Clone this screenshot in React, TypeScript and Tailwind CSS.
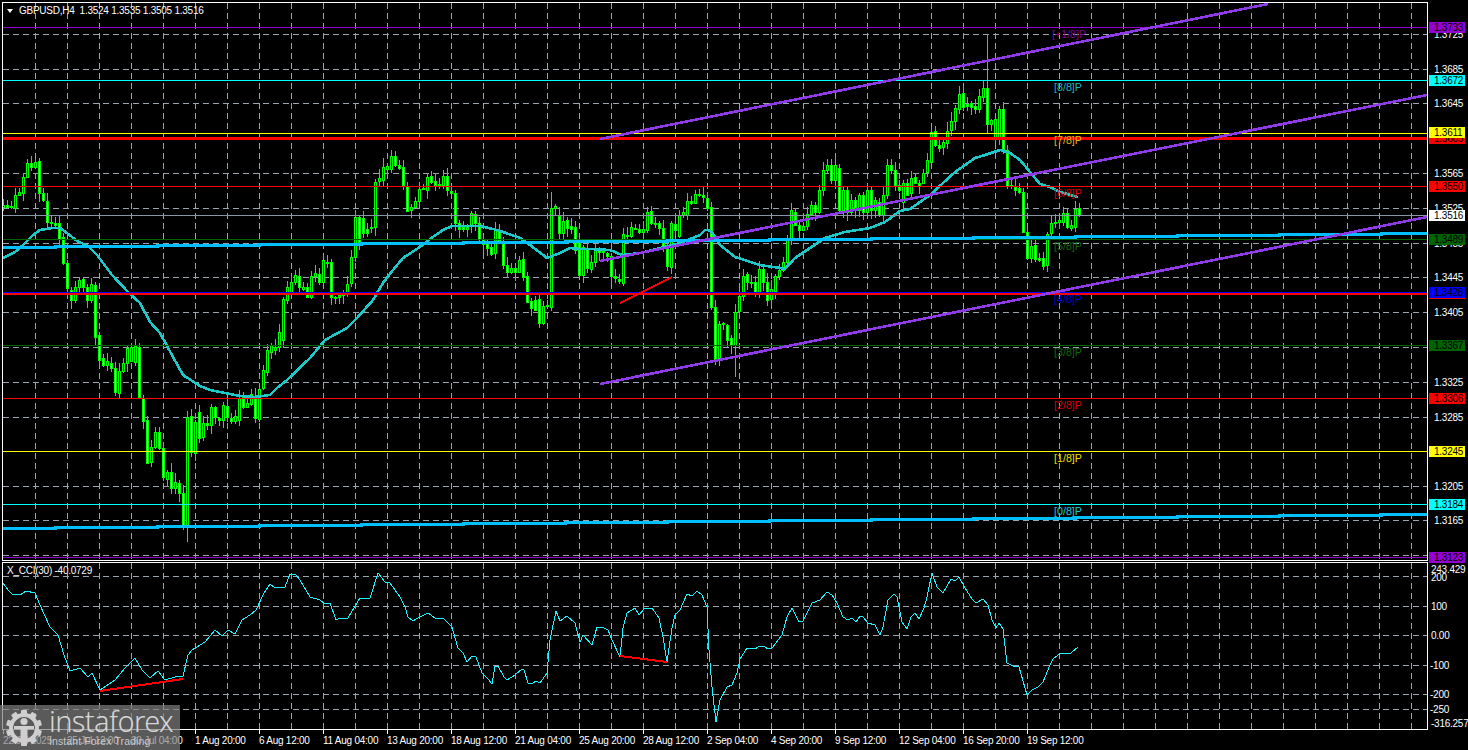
import React from "react";

// [open y, close y] in page pixels for candles at x = 3 + 4k. close < open means a rising bar.
const C: [number, number][] = [
[207,205],[205,207],[206,207],[208,195],[195,192],[193,177],[177,163],[163,167],[167,162],[161,193],
[193,200],[201,222],[222,223],[223,225],[223,239],[237,263],[263,288],[290,300],[300,287],[287,280],
[279,287],[287,300],[300,284],[285,337],[335,360],[358,365],[365,361],[363,368],[368,392],[393,371],
[371,363],[363,348],[361,347],[362,346],[347,397],[398,421],[420,463],[462,447],[447,432],[432,448],
[448,477],[479,472],[472,488],[488,482],[483,493],[493,525],[525,417],[416,452],[453,422],[412,438],
[437,423],[423,425],[425,407],[407,417],[418,420],[420,405],[406,417],[418,421],[421,416],[420,398],
[397,407],[407,403],[404,394],[396,418],[419,389],[388,370],[372,350],[352,345],[350,347],[347,332],
[340,299],[300,287],[292,282],[282,275],[276,287],[289,287],[287,297],[297,276],[276,273],[274,282],
[282,260],[263,262],[262,297],[298,297],[297,295],[295,293],[292,284],[283,257],[257,217],[217,242],
[218,233],[229,233],[228,227],[227,182],[181,178],[180,167],[169,166],[169,156],[156,165],[165,168],
[167,185],[186,211],[210,207],[207,201],[201,189],[189,188],[190,177],[176,182],[181,185],[184,185],
[185,176],[176,190],[191,193],[193,223],[223,229],[227,229],[229,227],[226,213],[214,223],[223,239],
[239,244],[243,248],[247,254],[253,230],[230,240],[243,265],[265,272],[272,268],[268,272],[272,260],
[259,277],[276,302],[301,308],[300,310],[299,323],[323,306],[306,305],[307,208],[208,206],[216,233],
[233,221],[220,228],[226,229],[227,250],[242,275],[275,247],[248,268],[269,262],[262,248],[250,252],
[251,252],[253,256],[256,276],[276,278],[279,281],[283,234],[235,236],[236,227],[228,229],[229,232],
[232,229],[230,212],[211,223],[223,224],[223,228],[228,247],[248,266],[267,223],[224,230],[236,215],
[215,212],[215,201],[201,203],[203,194],[194,195],[195,197],[198,208],[207,307],[307,360],[358,324],
[324,323],[325,340],[338,345],[345,312],[311,296],[296,276],[274,282],[282,283],[282,293],[293,269],
[269,282],[282,300],[299,289],[291,276],[276,270],[270,262],[262,240],[240,210],[212,225],[225,230],
[230,226],[226,214],[214,205],[205,212],[212,190],[190,170],[170,165],[165,180],[180,165],[168,210],
[210,190],[190,212],[212,200],[200,210],[210,195],[195,212],[212,190],[190,210],[210,200],[202,215],
[215,195],[195,165],[165,170],[170,185],[185,190],[202,183],[183,195],[193,178],[177,183],[183,186],
[183,173],[172,160],[162,132],[131,145],[145,148],[147,142],[143,131],[130,121],[121,108],[109,94],
[93,107],[104,106],[103,107],[106,109],[109,96],[97,88],[88,124],[124,120],[137,119],[137,109],
[109,149],[150,186],[185,186],[187,190],[188,192],[192,232],[232,258],[258,246],[245,259],[258,260],
[258,266],[265,234],[233,223],[223,222],[222,220],[222,213],[213,227],[228,225],[227,209],[208,215],
];

const MA = "3,258 15,252 23,245 33,235 40,230 52,228 60,228 67,233 77,241 88,246 97,255 112,275 128,292 140,303 150,322 160,333 173,357 183,375 200,386 210,390 225,393 240,396 255,397 270,395 277,388 287,380 310,358 325,340 347,328 357,318 373,300 383,283 393,270 403,258 423,245 430,239 443,230 452,226 480,226 493,229 503,232 520,238 530,245 547,258 560,253 570,248 580,249 590,249 610,250 622,255 640,253 660,248 680,243 700,235 705,230 708,230 712,232 720,245 735,257 760,265 780,268 785,269 795,258 810,248 825,238 845,232 870,228 885,222 900,211 910,209 930,195 955,172 975,158 985,155 1000,150 1010,153 1020,160 1030,172 1040,184 1050,187 1060,192 1078,197";

const CCI = "3,583 8,590 12,594 20,595 26,591 35,593 40,605 50,627 58,635 64,655 70,671 80,668 88,677 92,673 100,690 115,680 125,668 135,658 142,670 150,678 158,671 165,680 175,677 183,676 188,655 192,650 205,642 215,630 222,636 228,630 235,634 242,620 250,615 256,610 264,593 270,584 275,588 285,587 290,574 295,574 300,580 310,597 320,600 325,604 330,603 336,620 340,618 348,618 360,598 370,598 378,573 385,582 390,583 400,597 405,607 408,617 413,621 418,618 428,613 435,618 443,618 452,627 458,648 463,653 467,662 472,656 476,657 482,673 488,679 492,684 495,666 498,666 504,677 507,680 515,675 522,669 524,670 528,683 532,684 536,681 540,683 547,673 550,640 556,611 560,621 567,616 575,623 580,642 583,635 592,645 597,627 602,627 608,630 612,640 620,657 623,628 627,613 635,608 639,615 645,608 652,608 659,618 663,637 667,662 672,628 675,615 680,610 687,594 692,596 697,591 702,595 707,607 709,650 712,687 716,722 720,700 727,687 732,685 737,673 740,659 747,648 755,649 760,646 764,646 768,649 772,648 782,635 787,617 792,608 799,622 803,621 812,603 820,600 827,592 832,595 837,603 843,617 848,620 852,618 856,622 860,616 863,617 868,623 875,625 880,635 883,627 888,600 894,594 897,597 902,622 907,629 911,617 915,613 919,619 924,608 927,597 932,573 937,587 943,593 951,579 955,581 959,577 965,588 972,599 976,603 983,599 988,605 992,620 996,628 999,623 1003,629 1007,663 1013,666 1019,667 1027,695 1032,690 1038,687 1043,682 1050,665 1053,659 1061,653 1071,653 1078,647";

const rnd = (i: number, n: number) => ((i * 7919 + n * 104729 + i * i * 13) % 97) / 97;

const verticals = Array.from({ length: 44 }, (_, i) => 35 + 32 * i);
const mainGrid = [34, 69, 103, 138, 173, 208, 243, 277, 312, 347, 382, 417, 451, 486, 520, 555];
const cciGrid = [576, 606, 635, 665, 694, 709];

const levels = [
  { y: 27, h: 1, c: "#9400d3" }, { y: 80, h: 1, c: "#00ffff" }, { y: 133, h: 1, c: "#ffff00" },
  { y: 137, h: 3, c: "#ff0000" }, { y: 186, h: 1, c: "#ff0000" }, { y: 215, h: 1, c: "#8895a2" },
  { y: 239, h: 1, c: "#006400" }, { y: 292, h: 1, c: "#0000ff" }, { y: 293, h: 2, c: "#ff0000" },
  { y: 345, h: 1, c: "#006400" }, { y: 398, h: 1, c: "#ff0000" }, { y: 451, h: 1, c: "#ffff00" },
  { y: 504, h: 1, c: "#00ffff" }, { y: 557, h: 1, c: "#9400d3" },
];

const steps = (start: number) => {
  const pts: string[] = [];
  let x = 3;
  for (let k = 0; k < 15; k++) {
    const nx = k === 14 ? 1427 : 55 + 102 * k;
    pts.push(`${x},${start - k}`, `${nx},${start - k}`);
    x = nx;
  }
  return pts.join(" ");
};

const pivots = [
  { t: "[+1/8]P", y: 34, x: 1052, c: "text-[#7a0a8a]" }, { t: "[8/8]P", y: 87, x: 1054, c: "text-[#1fb6c9]" },
  { t: "[7/8]P", y: 140, x: 1054, c: "text-[#e0b818]" }, { t: "[6/8]P", y: 193, x: 1054, c: "text-[#d80000]" },
  { t: "[5/8]P", y: 246, x: 1054, c: "text-[#0a6a0a]" }, { t: "[4/8]P", y: 299, x: 1054, c: "text-[#0000d8]" },
  { t: "[3/8]P", y: 352, x: 1054, c: "text-[#0a6a0a]" }, { t: "[2/8]P", y: 405, x: 1054, c: "text-[#d80000]" },
  { t: "[1/8]P", y: 458, x: 1054, c: "text-[#e8e000]" }, { t: "[0/8]P", y: 511, x: 1054, c: "text-[#1fc8d8]" },
];

const priceTicks = [
  ["1.3725", 34], ["1.3685", 69], ["1.3645", 103], ["1.3565", 173], ["1.3525", 208], ["1.3485", 243],
  ["1.3445", 277], ["1.3405", 312], ["1.3365", 347], ["1.3325", 382], ["1.3285", 417], ["1.3205", 486], ["1.3165", 520],
] as const;

const priceTags = [
  { t: "1.3733", y: 27, c: "bg-[#9400d3]" }, { t: "1.3672", y: 80, c: "bg-[#00ffff]" },
  { t: "1.3605", y: 138, c: "bg-[#ff0000]" }, { t: "1.3611", y: 132, c: "bg-[#ffff00]" },
  { t: "1.3550", y: 186, c: "bg-[#ff0000]" }, { t: "1.3516", y: 215, c: "bg-white" },
  { t: "1.3489", y: 239, c: "bg-[#006400]" }, { t: "1.3426", y: 293, c: "bg-[#ff0000]" },
  { t: "1.3428", y: 292, c: "bg-[#0000ff]" }, { t: "1.3367", y: 345, c: "bg-[#006400]" },
  { t: "1.3306", y: 398, c: "bg-[#ff0000]" }, { t: "1.3245", y: 451, c: "bg-[#ffff00]" },
  { t: "1.3184", y: 504, c: "bg-[#00ffff]" }, { t: "1.3123", y: 557, c: "bg-[#9400d3]" },
];

const cciTicks = [
  ["243.429", 569, 3], ["200", 577, 3], ["100", 606, 3], ["0.00", 635, 3], ["-100", 665, 2],
  ["-200", 694, 2], ["-250", 709, 2], ["-316.257", 723, 3],
] as const;

const times = [
  "22 Jul 2025", "25 Jul 12:00", "30 Jul 04:00", "1 Aug 20:00", "6 Aug 12:00", "11 Aug 04:00",
  "13 Aug 20:00", "18 Aug 12:00", "21 Aug 04:00", "25 Aug 20:00", "28 Aug 12:00", "2 Sep 04:00",
  "4 Sep 20:00", "9 Sep 12:00", "12 Sep 04:00", "16 Sep 20:00", "19 Sep 12:00",
];

function Candles() {
  return (
    <g shapeRendering="crispEdges">
      {C.map(([o, c], i) => {
        const x = 3 + 4 * i;
        const top = Math.min(o, c);
        const bot = Math.max(o, c);
        let hi = top - 1 - Math.round(rnd(i, 1) * 8);
        let lo = bot + 1 + Math.round(rnd(i, 2) * 8);
        if (x === 987) hi = 34;
        if (x === 735) lo = 377;
        if (x === 187) lo = 542;
        if (x === 551) hi = 192;
        const h = Math.max(bot - top, 1);
        return (
          <g key={i}>
            <rect x={x} y={hi} width={1} height={lo - hi} fill="#00ff00" />
            <rect x={x - 1} y={top} width={3} height={h + 1} fill="#00ff00" />
            {h > 1 && <rect x={x} y={top + 1} width={1} height={h - 1} fill={c > o ? "#ffffff" : "#000000"} />}
          </g>
        );
      })}
    </g>
  );
}

function Grid({ ys, top, bottom }: { ys: number[]; top: number; bottom: number }) {
  return (
    <g stroke="#9aa5b0" strokeWidth={1} strokeDasharray="6 4" shapeRendering="crispEdges">
      {ys.map((y) => <line key={y} x1={3} x2={1427} y1={y + 0.5} y2={y + 0.5} />)}
      {verticals.map((x) => <line key={x} x1={x + 0.5} x2={x + 0.5} y1={top} y2={bottom} />)}
    </g>
  );
}

function MainChart() {
  return (
    <svg className="block" width={1424} height={557} viewBox="3 3 1424 557">
      <Grid ys={mainGrid} top={3} bottom={560} />
      <Candles />
      <polyline points={MA} fill="none" stroke="#1fc8c8" strokeWidth={2.6} shapeRendering="crispEdges" />
      <g shapeRendering="crispEdges">
        {levels.map((l) => <rect key={l.y} x={3} y={l.y} width={1424} height={l.h} fill={l.c} />)}
      </g>
      <polyline points={steps(247)} fill="none" stroke="#00bfff" strokeWidth={3} shapeRendering="crispEdges" />
      <polyline points={steps(528)} fill="none" stroke="#00bfff" strokeWidth={3} shapeRendering="crispEdges" />
      <g stroke="#8f3be8" strokeWidth={2.6} shapeRendering="crispEdges">
        <line x1={600} y1={139} x2={1268} y2={4} />
        <line x1={600} y1={261} x2={1427} y2={95} />
        <line x1={600} y1={384} x2={1427} y2={217} />
      </g>
      <line x1={620} y1={303} x2={672} y2={277} stroke="#ff0000" strokeWidth={2} shapeRendering="crispEdges" />
    </svg>
  );
}

function CciChart() {
  return (
    <svg className="block" width={1424} height={166} viewBox="3 563 1424 166">
      <Grid ys={cciGrid} top={563} bottom={729} />
      <polyline points={CCI} fill="none" stroke="#1ff2ff" strokeWidth={1} shapeRendering="crispEdges" />
      <line x1={100} y1={691} x2={183} y2={679} stroke="#ff0000" strokeWidth={2} shapeRendering="crispEdges" />
      <line x1={620} y1={656} x2={667} y2={662} stroke="#ff0000" strokeWidth={2} shapeRendering="crispEdges" />
    </svg>
  );
}

function GearLogo() {
  const teeth = Array.from({ length: 10 }, (_, i) => i * 36);
  return (
    <svg width={36} height={38} viewBox="0 0 36 38" className="shrink-0">
      {teeth.map((a) => (
        <rect key={a} x={15} y={1} width={6} height={7} rx={1} fill="#cfcfcf" transform={`rotate(${a} 18 19)`} />
      ))}
      <circle cx={18} cy={19} r={13} fill="none" stroke="#cfcfcf" strokeWidth={4} />
      <circle cx={18} cy={12.5} r={3.6} fill="#cfcfcf" />
      <path d="M8 17 H28 V20 H21.5 V32 H14.5 V20 H8 Z" fill="#cfcfcf" />
    </svg>
  );
}

export default function App() {
  return (
    <div className="relative flex h-[750px] w-[1468px] flex-col overflow-hidden bg-black pl-[2px] pt-[2px] font-['Liberation_Sans',Arial,sans-serif] text-[10px] leading-[12px] tracking-[-0.25px] text-white">
      <div className="flex h-[559px]">
        <div className="relative h-full w-[1426px] border border-white">
          <MainChart />
          <div className="absolute left-[4px] top-[2px] flex items-center gap-[6px] whitespace-pre leading-[12px]">
            <span className="h-0 w-0 border-x-[3.5px] border-t-[4px] border-x-transparent border-t-white" />
            <span>GBPUSD,H4  1.3524 1.3535 1.3505 1.3516</span>
          </div>
          {pivots.map((p) => (
            <span
              key={p.t}
              className={`absolute whitespace-pre text-[10.7px] leading-[12px] tracking-normal ${p.c}`}
              style={{ left: p.x - 3, top: p.y - 9 }}
            >
              {p.t}
            </span>
          ))}
        </div>
        <div className="relative w-[40px]">
          {priceTicks.map(([t, y]) => (
            <span key={t} className="absolute left-[6px]" style={{ top: y - 7 }}>{t}</span>
          ))}
          {priceTags.map((p) => (
            <span
              key={p.t}
              className={`absolute left-[1px] h-[11px] w-[36px] pl-[5px] leading-[11px] text-black ${p.c}`}
              style={{ top: p.y - 7.5 }}
            >
              {p.t}
            </span>
          ))}
        </div>
      </div>

      <div className="mt-[1px] flex h-[168px]">
        <div className="relative h-full w-[1426px] border border-white">
          <CciChart />
          <span className="absolute left-[4px] top-[2px] whitespace-pre">X_CCI(30) -40.0729</span>
        </div>
        <div className="relative w-[40px]">
          {cciTicks.map(([t, y, l]) => (
            <span key={t} className="absolute" style={{ top: y - 567, left: l }}>{t}</span>
          ))}
        </div>
      </div>

      <div className="flex pl-[1px]">
        {times.map((t) => (
          <div key={t} className="flex w-[64px] shrink-0 flex-col items-start">
            <span className="h-[4px] w-px bg-white" />
            <span className="whitespace-pre pt-[1px]">{t}</span>
          </div>
        ))}
      </div>

      <div className="absolute bottom-0 left-0 flex h-[45px] w-[180px] items-center gap-[7px] bg-[rgba(128,128,128,0.7)] pl-[6px]">
        <GearLogo />
        <div className="flex -translate-y-px flex-col">
          <span className="font-['Noto_Sans',sans-serif] text-[29px] font-light leading-[29px] tracking-[-0.6px] text-[#d6d6d6]">instaforex</span>
          <span className="text-[10.5px] leading-[12px] tracking-[0.1px] text-[#c8c8c8]">Instant Forex Trading</span>
        </div>
      </div>
    </div>
  );
}
